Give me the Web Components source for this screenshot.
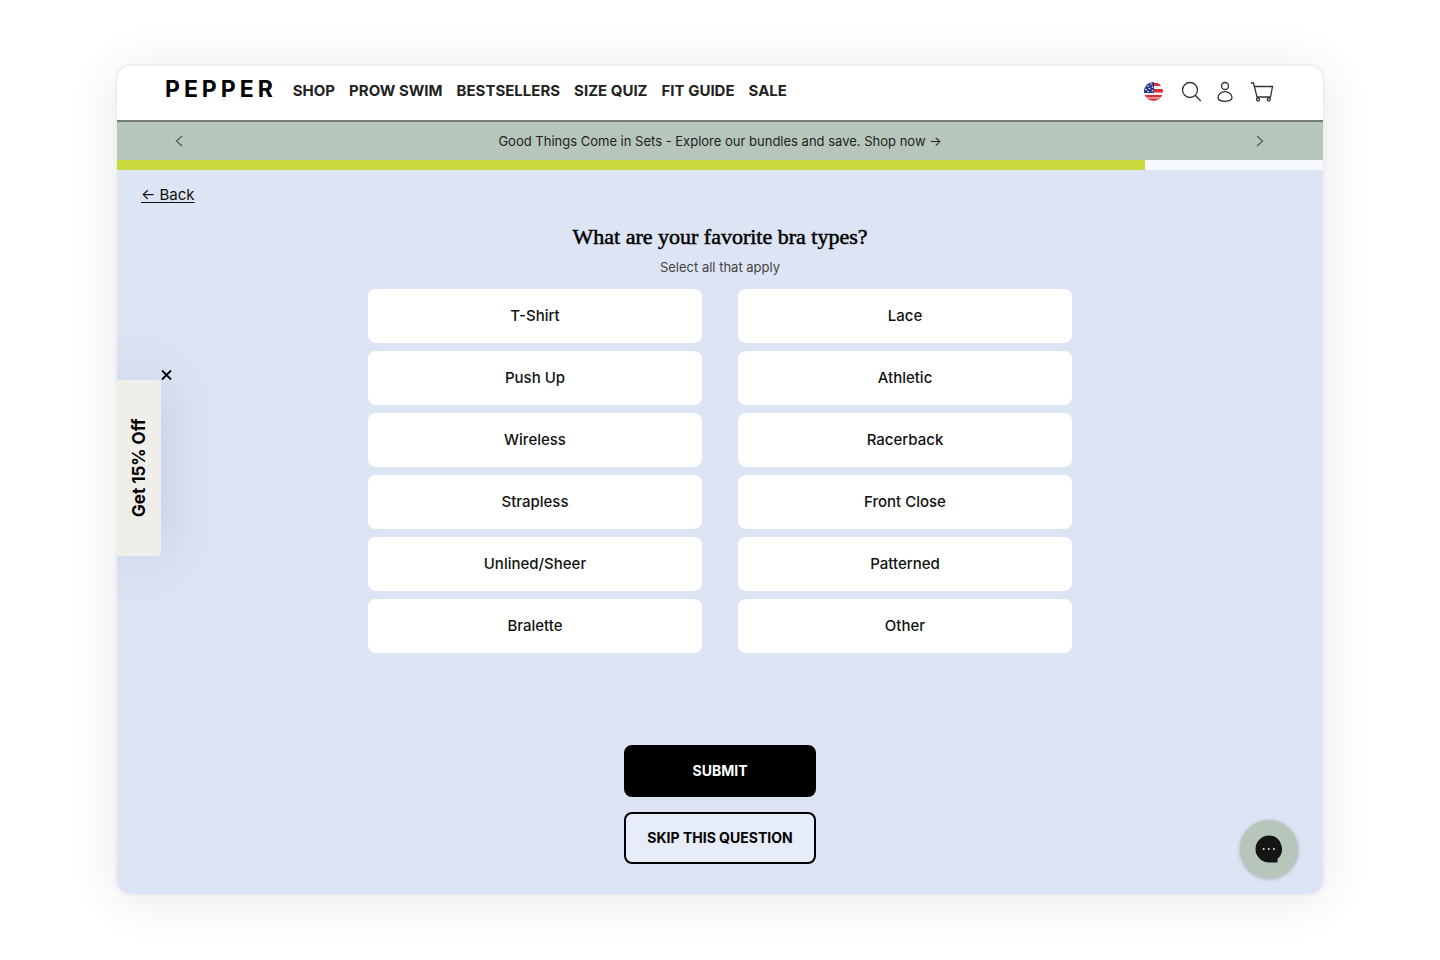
<!DOCTYPE html>
<html lang="en">
<head>
  <meta charset="utf-8">
  <meta name="viewport" content="width=device-width, initial-scale=1">
  <title>Pepper</title>
  <style>
    body {
      margin: 0;
      background: #fff;
      color: #111;
      font-family: Inter, "Liberation Sans", sans-serif;
    }
  </style>
</head>
<body>
  <quiz-page>
    <site-header slot="header"></site-header>
    <promo-bar slot="header">Good Things Come in Sets - Explore our bundles and save. Shop now →</promo-bar>
    <progress-bar slot="header" value="85.2"></progress-bar>
    <quiz-question>
      <span slot="title">What are your favorite bra types?</span>
      <span slot="hint">Select all that apply</span>
      <quiz-option>T-Shirt</quiz-option>
      <quiz-option>Lace</quiz-option>
      <quiz-option>Push Up</quiz-option>
      <quiz-option>Athletic</quiz-option>
      <quiz-option>Wireless</quiz-option>
      <quiz-option>Racerback</quiz-option>
      <quiz-option>Strapless</quiz-option>
      <quiz-option>Front Close</quiz-option>
      <quiz-option>Unlined/Sheer</quiz-option>
      <quiz-option>Patterned</quiz-option>
      <quiz-option>Bralette</quiz-option>
      <quiz-option>Other</quiz-option>
    </quiz-question>
    <offer-tab slot="overlay">Get 15% Off</offer-tab>
    <chat-button slot="overlay"></chat-button>
  </quiz-page>

  <script>
    function attach(element, html) {
      const template = document.createElement('template');
      template.innerHTML = html;
      const root = element.attachShadow({ mode: 'open' });
      root.appendChild(template.content.cloneNode(true));
      return root;
    }

    class QuizPage extends HTMLElement {
      constructor() {
        super();
        attach(this, `
          <style>
            :host {
              display: flex;
              box-sizing: border-box;
              min-height: 100vh;
              padding: 66px 117px;
            }

            .window {
              position: relative;
              display: flex;
              flex: 1;
              flex-direction: column;
              overflow: hidden;
              border-radius: 14px;
              background: #dde4f4;
            }

            .frame {
              display: flex;
              flex: 1;
              border-radius: 14px;
              box-shadow: 0 0 0 2px #efefef, 0 4px 50px rgba(0, 0, 0, 0.1);
            }

            main {
              display: flex;
              flex: 1;
              flex-direction: column;
            }
          </style>
          <div class="frame">
            <div class="window">
              <slot name="header"></slot>
              <main><slot></slot></main>
              <slot name="overlay"></slot>
            </div>
          </div>
        `);
      }
    }

    class SiteHeader extends HTMLElement {
      constructor() {
        super();
        attach(this, `
          <style>
            :host {
              display: block;
              background: #fff;
              border-bottom: 2px solid #777b79;
            }

            header {
              display: flex;
              align-items: center;
              height: 54px;
              padding: 0 48px;
            }

            a {
              color: #222;
              text-decoration: none;
            }

            .logo {
              margin-right: 16px;
              padding-bottom: 8px;
              color: #000;
              font-size: 23px;
              font-weight: 700;
              line-height: 24px;
              letter-spacing: 4px;
            }

            nav {
              display: flex;
              flex: 1;
              gap: 14px;
              padding-bottom: 4px;
              font-size: 15px;
              font-weight: 700;
              line-height: 20px;
              white-space: nowrap;
            }

            .tools {
              display: flex;
              align-items: center;
              gap: 14px;
              padding-bottom: 2px;
            }

            button {
              display: flex;
              padding: 0;
              border: 0;
              background: none;
              cursor: pointer;
            }

            svg {
              display: block;
              fill: none;
              stroke: #333;
              stroke-width: 1.3;
            }
          </style>
          <header>
            <a class="logo" href="#">PEPPER</a>
            <nav>
              <a href="#">SHOP</a>
              <a href="#">PROW SWIM</a>
              <a href="#">BESTSELLERS</a>
              <a href="#">SIZE QUIZ</a>
              <a href="#">FIT GUIDE</a>
              <a href="#">SALE</a>
            </nav>
            <div class="tools">
              <button type="button" aria-label="Country">
                <svg width="24" height="24" viewBox="0 0 24 24">
                  <clipPath id="disc"><circle cx="10.500" cy="11.500" r="9.500"/></clipPath>
                  <g clip-path="url(#disc)" stroke="none">
                    <path fill="#f1f1f5" d="M0 2h21v20H0z"/>
                    <path fill="#e02f2f" d="M0 3h21v3H0zM0 9h21v3.500H0zM0 15.300h21v2H0zM0 18.500h21v3H0zM0 15h21v2.500H0z"/>
                    <path fill="#2b3a8c" d="M0 1h11v12H0z"/>
                    <g fill="#fff">
                      <circle cx="8" cy="4" r=".8"/><circle cx="5" cy="6" r=".8"/>
                      <circle cx="9.500" cy="7" r=".8"/><circle cx="6.500" cy="8.500" r=".8"/>
                      <circle cx="3" cy="9.500" r=".8"/><circle cx="9.500" cy="10.800" r=".8"/>
                      <circle cx="5" cy="11.500" r=".8"/>
                    </g>
                  </g>
                </svg>
              </button>
              <button type="button" aria-label="Search">
                <svg width="20" height="24" viewBox="0 0 20 24">
                  <circle cx="9" cy="10" r="7.500"/>
                  <path d="M14.200 15.200l5.500 5.800"/>
                </svg>
              </button>
              <button type="button" aria-label="Account">
                <svg width="20" height="24" viewBox="0 0 20 24">
                  <circle cx="10" cy="6" r="3.500"/>
                  <path d="M10 11.600c4 0 7 2.800 7 6 0 2.600-2.500 3.700-7 3.700s-7-1.100-7-3.700c0-3.200 3-6 7-6z"/>
                </svg>
              </button>
              <button type="button" aria-label="Cart">
                <svg width="26" height="24" viewBox="0 0 26 24">
                  <path d="M2 3h2.500l3.500 14h13.500L23.500 6.500H5.500"/>
                  <circle cx="9" cy="19.500" r="1.500"/>
                  <circle cx="19.800" cy="19.500" r="1.500"/>
                </svg>
              </button>
            </div>
          </header>
        `);
      }
    }

    class PromoBar extends HTMLElement {
      constructor() {
        super();
        attach(this, `
          <style>
            :host {
              display: flex;
              align-items: center;
              justify-content: space-between;
              height: 38px;
              padding: 0 56px;
              background: #b6c6bb;
              color: #222;
              font-size: 13px;
              line-height: 20px;
            }

            a {
              color: inherit;
              text-decoration: none;
            }

            button {
              display: flex;
              padding: 0;
              border: 0;
              background: none;
              cursor: pointer;
            }

            svg {
              fill: none;
              stroke: #4f5a53;
              stroke-width: 1.2;
            }
          </style>
          <button type="button" aria-label="Previous">
            <svg width="14" height="14" viewBox="0 0 14 14"><path d="M9 2L3.500 7 9 12"/></svg>
          </button>
          <a href="#"><slot></slot></a>
          <button type="button" aria-label="Next">
            <svg width="14" height="14" viewBox="0 0 14 14"><path d="M4 2l5.500 5L4 12"/></svg>
          </button>
        `);
      }
    }

    class ProgressBar extends HTMLElement {
      constructor() {
        super();
        this.$root = attach(this, `
          <style>
            :host {
              display: block;
              height: 10px;
              background: #f5f8fc;
            }

            div {
              height: 100%;
              background: #c9d83c;
            }
          </style>
          <div role="progressbar" aria-label="Quiz progress"></div>
        `);
      }

      connectedCallback() {
        const bar = this.$root.querySelector('div');
        bar.style.width = `${this.getAttribute('value')}%`;
        bar.setAttribute('aria-valuenow', this.getAttribute('value'));
      }
    }

    class QuizQuestion extends HTMLElement {
      constructor() {
        super();
        attach(this, `
          <style>
            :host {
              display: block;
              padding: 15px 24px 30px;
            }

            form {
              display: flex;
              flex-direction: column;
              align-items: center;
            }

            .back {
              align-self: flex-start;
              color: #111;
              font-size: 15px;
              line-height: 20px;
              text-underline-offset: 2px;
            }

            h1 {
              margin: 16px 0 0;
              color: #000;
              font-family: "Liberation Serif", serif;
              font-size: 22px;
              font-weight: 400;
              line-height: 32px;
              -webkit-text-stroke: 0.5px #000;
            }

            p {
              margin: 4px 0 12px;
              color: #444;
              font-size: 13px;
              line-height: 20px;
            }

            .options {
              display: grid;
              grid-template-columns: 1fr 1fr;
              gap: 8px 36px;
              width: 100%;
              max-width: 704px;
            }

            .actions {
              display: flex;
              flex-direction: column;
              gap: 15px;
              margin-top: 92px;
            }

            button {
              box-sizing: border-box;
              height: 52px;
              padding: 0 21px;
              border: 2px solid #000;
              border-radius: 8px;
              background: #e6ecf8;
              color: #000;
              font: 700 14px/20px Inter, "Liberation Sans", sans-serif;
              cursor: pointer;
            }

            .submit {
              background: #000;
              color: #fff;
            }
          </style>
          <form>
            <a class="back" href="#">← Back</a>
            <h1><slot name="title"></slot></h1>
            <p><slot name="hint"></slot></p>
            <div class="options"><slot></slot></div>
            <div class="actions">
              <button class="submit" type="submit">SUBMIT</button>
              <button type="button">SKIP THIS QUESTION</button>
            </div>
          </form>
        `).querySelector('form').addEventListener('submit', this.onSubmit.bind(this));
      }

      onSubmit(event) {
        event.preventDefault();
        const answers = [...this.querySelectorAll('quiz-option')]
          .filter((option) => option.checked)
          .map((option) => option.textContent);
        this.dispatchEvent(new CustomEvent('answer', { detail: answers }));
      }
    }

    class QuizOption extends HTMLElement {
      constructor() {
        super();
        this.$input = attach(this, `
          <style>
            :host {
              display: block;
            }

            label {
              display: grid;
              place-items: center;
              height: 54px;
              border-radius: 8px;
              background: #fff;
              color: #111;
              font-size: 15px;
              font-weight: 500;
              line-height: 20px;
              cursor: pointer;
            }

            input {
              grid-area: 1 / 1;
              width: 100%;
              height: 100%;
              margin: 0;
              border-radius: 8px;
              appearance: none;
              cursor: pointer;
            }

            input:checked {
              box-shadow: inset 0 0 0 2px #000;
            }

            span {
              grid-area: 1 / 1;
            }
          </style>
          <label><input type="checkbox"><span><slot></slot></span></label>
        `).querySelector('input');
      }

      get checked() {
        return this.$input.checked;
      }
    }

    class OfferTab extends HTMLElement {
      constructor() {
        super();
        attach(this, `
          <style>
            :host {
              position: absolute;
              top: 302px;
              left: 0;
              display: flex;
              align-items: flex-start;
            }

            button {
              border: 0;
              cursor: pointer;
            }

            .tab {
              width: 44px;
              height: 176px;
              margin-top: 12px;
              padding: 0;
              border-radius: 4px 0 0 4px;
              background: #efeee8;
              box-shadow: 0 0 60px rgba(60, 90, 130, 0.2);
              color: #000;
              font: 700 17px/44px Inter, "Liberation Sans", sans-serif;
              writing-mode: vertical-rl;
              transform: rotate(180deg);
            }

            .close {
              display: flex;
              padding: 0;
              background: none;
            }

            svg {
              stroke: #000;
              stroke-width: 1.8;
            }
          </style>
          <button class="tab" type="button"><slot></slot></button>
          <button class="close" type="button" aria-label="Close offer">
            <svg width="12" height="14" viewBox="0 0 12 14"><path d="M1 2.500l9 9M10 2.500l-9 9"/></svg>
          </button>
        `);
      }
    }

    class ChatButton extends HTMLElement {
      constructor() {
        super();
        attach(this, `
          <style>
            :host {
              position: absolute;
              right: 25px;
              bottom: 16px;
            }

            button {
              display: grid;
              place-items: center;
              width: 58px;
              height: 58px;
              padding: 0;
              border: 0;
              border-radius: 50%;
              background: #b6c6bb;
              box-shadow: 0 1px 4px rgba(0, 0, 0, 0.25);
              cursor: pointer;
            }
          </style>
          <button type="button" aria-label="Chat">
            <svg width="28" height="28" viewBox="0 0 28 28">
              <path fill="#151515" d="M14 .5a13.500 13.500 0 1 0 0 27h8.500v-3.500A13.500 13.500 0 0 0 14 .5z"/>
              <g fill="#d5e2d8">
                <circle cx="8.700" cy="14" r="1"/>
                <circle cx="13.800" cy="14" r="1"/>
                <circle cx="18.900" cy="14" r="1"/>
              </g>
            </svg>
          </button>
        `);
      }
    }

    customElements.define('quiz-page', QuizPage);
    customElements.define('site-header', SiteHeader);
    customElements.define('promo-bar', PromoBar);
    customElements.define('progress-bar', ProgressBar);
    customElements.define('quiz-question', QuizQuestion);
    customElements.define('quiz-option', QuizOption);
    customElements.define('offer-tab', OfferTab);
    customElements.define('chat-button', ChatButton);
  </script>
</body>
</html>
